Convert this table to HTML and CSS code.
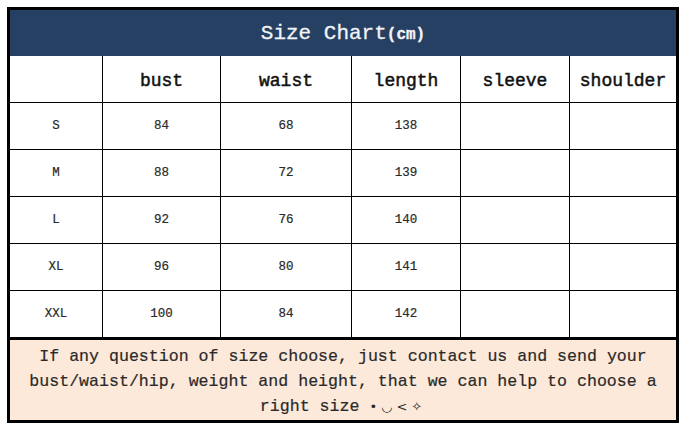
FILE: index.html
```html
<!DOCTYPE html>
<html lang="en">
<head>
<meta charset="utf-8">
<title>Size Chart</title>
<link rel="stylesheet" href="styles.css">
</head>
<body>
<div class="page">
  <table class="chart">
    <colgroup>
      <col class="c1"><col class="c2"><col class="c3"><col class="c4"><col class="c5"><col class="c6">
    </colgroup>
    <thead>
      <tr class="title-row"><th colspan="6" class="title">Size Chart<span class="unit">(cm)</span></th></tr>
      <tr class="head-row">
        <th></th><th>bust</th><th>waist</th><th>length</th><th>sleeve</th><th class="last">shoulder</th>
      </tr>
    </thead>
    <tbody>
      <tr><td>S</td><td>84</td><td>68</td><td>138</td><td></td><td class="last"></td></tr>
      <tr><td>M</td><td>88</td><td>72</td><td>139</td><td></td><td class="last"></td></tr>
      <tr><td>L</td><td>92</td><td>76</td><td>140</td><td></td><td class="last"></td></tr>
      <tr><td>XL</td><td>96</td><td>80</td><td>141</td><td></td><td class="last"></td></tr>
      <tr class="final"><td>XXL</td><td>100</td><td>84</td><td>142</td><td></td><td class="last"></td></tr>
    </tbody>
    <tfoot>
      <tr><td colspan="6" class="note"><div class="note-text"><span class="line">If any question of size choose, just contact us and send your</span> <span class="line">bust/waist/hip, weight and height, that we can help to choose a</span> <span class="line">right size</span> <span class="emo">•◡&lt;✧</span></div></td></tr>
    </tfoot>
  </table>
</div>
</body>
</html>
```
FILE: styles.css
```css
html, body {
  margin: 0;
  padding: 0;
  background: #ffffff;
}
.page {
  padding: 7px;
  width: 684px;
  height: 427px;
  box-sizing: border-box;
}
.chart {
  border-collapse: separate;
  border-spacing: 0;
  table-layout: fixed;
  width: 672px;
  border: 3px solid #000;
  font-family: "Liberation Mono", "DejaVu Sans Mono", monospace;
  color: #1a1a1a;
}
.c1 { width: 93px; }
.c2 { width: 118px; }
.c3 { width: 131px; }
.c4 { width: 109px; }
.c5 { width: 109px; }
.c6 { width: 106px; }

.chart th, .chart td {
  padding: 0;
  text-align: center;
  vertical-align: middle;
  box-sizing: border-box;
}
.title {
  height: 46px;
  background: #254062;
  color: #f2f4f7;
  font-weight: normal;
  font-size: 21px;
  -webkit-text-stroke: 0.3px #f2f4f7;
  padding-top: 7px;
}
.unit {
  font-size: 16px;
  font-weight: bold;
}
.head-row th {
  height: 47px;
  font-size: 18px;
  font-weight: normal;
  color: #111;
  -webkit-text-stroke: 0.5px #111;
  border-right: 1px solid #000;
  border-bottom: 1px solid #000;
  padding-top: 3px;
}
tbody td {
  height: 47px;
  font-size: 12.5px;
  color: #2a2a2a;
  -webkit-text-stroke: 0.2px #2a2a2a;
  border-right: 1px solid #000;
  border-bottom: 1px solid #000;
  padding-top: 6px;
}
.chart .last {
  border-right: none;
}
tbody tr.final td {
  height: 49px;
  border-bottom: 3px solid #000;
}
.note {
  height: 80px;
  background: #fde9d9;
  vertical-align: top;
  padding: 8px 14px 0;
}
.note-text {
  height: 72px;
  font-size: 16.6px;
  line-height: 25px;
  color: #2a2a2a;
  -webkit-text-stroke: 0.2px #2a2a2a;
}
.line {
  white-space: nowrap;
}
.emo {
  font-family: "DejaVu Sans", sans-serif;
  font-size: 13px;
  letter-spacing: 4px;
  -webkit-text-stroke: 0;
  white-space: nowrap;
}
```
